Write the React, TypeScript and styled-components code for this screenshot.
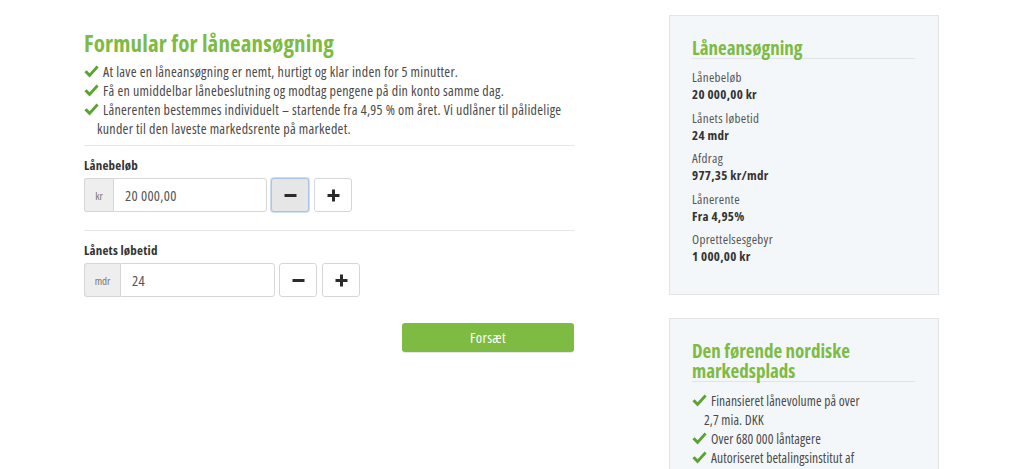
import React from "react";
import styled, { createGlobalStyle } from "styled-components";

const GlobalStyle = createGlobalStyle`
  html, body { margin: 0; padding: 0; background: #fff; }
  body {
    font-family: "Open Sans", "Noto Sans", sans-serif;
    font-stretch: 75%;
    color: #4a4a4a;
  }
  * { box-sizing: border-box; }
`;

const GREEN = "#7dbb42";
const CHECK = "#5aa32f";

const Page = styled.div`
  display: flex;
  align-items: flex-start;
  padding: 15px 0 0 84px;
  gap: 95px;
  height: 469px;
  overflow: hidden;
`;

const Main = styled.main`
  width: 490px;
  padding-top: 14px;
  display: flex;
  flex-direction: column;
`;

const Title = styled.h1`
  margin: 0;
  font-size: 23px;
  line-height: 28px;
  font-weight: 700;
  color: ${GREEN};
  letter-spacing: 0.15px;
`;

const CheckList = styled.ul<{ $indent: number }>`
  list-style: none;
  margin: 5px 0 0;
  padding: 0;
  font-size: 14px;
  line-height: 19px;
  letter-spacing: 0.28px;
  color: #4a4a4a;
  li {
    padding-left: ${(p) => p.$indent}px;
    text-indent: -${(p) => p.$indent}px;
  }
`;

const CheckIcon = styled.svg`
  width: 15px;
  height: 13px;
  vertical-align: -1px;
  margin-right: 4px;
`;

const Check = () => (
  <CheckIcon viewBox="0 0 15 13">
    <path
      d="M0.4 7.2 L2.6 5.2 L5.6 8.2 L12.6 0.6 L14.6 2.4 L5.6 12.4 Z"
      fill={CHECK}
    />
  </CheckIcon>
);

const Divider = styled.hr<{ $top: number; $bottom: number }>`
  border: none;
  border-top: 1px solid #e6e6e6;
  margin: ${(p) => p.$top}px 0 ${(p) => p.$bottom}px;
  width: 100%;
`;

const Label = styled.label`
  display: block;
  font-size: 13px;
  line-height: 18px;
  font-weight: 700;
  letter-spacing: 0.2px;
  color: #333;
  margin-bottom: 4px;
`;

const FieldRow = styled.div`
  display: flex;
  align-items: stretch;
  height: 34px;
`;

const InputGroup = styled.div<{ $width: number }>`
  display: flex;
  width: ${(p) => p.$width}px;
  height: 34px;
`;

const Addon = styled.span<{ $width: number }>`
  display: flex;
  align-items: center;
  justify-content: center;
  width: ${(p) => p.$width}px;
  background: #eeeeee;
  border: 1px solid #d6d6d6;
  border-right: none;
  border-radius: 3px 0 0 3px;
  font-size: 11px;
  color: #777;
`;

const Input = styled.input`
  flex: 1;
  min-width: 0;
  border: 1px solid #d6d6d6;
  border-radius: 0 3px 3px 0;
  padding: 0 11px;
  font-family: inherit;
  font-stretch: 75%;
  font-size: 14.5px;
  letter-spacing: 0.3px;
  color: #555;
  outline: none;
  background: #fff;
`;

const StepButton = styled.button<{ $active?: boolean }>`
  width: 38px;
  height: 34px;
  margin-left: 4px;
  display: flex;
  align-items: center;
  justify-content: center;
  border-radius: 3px;
  border: 1px solid ${(p) => (p.$active ? "#a9c4e6" : "#d6d6d6")};
  background: ${(p) => (p.$active ? "#e6e6e6" : "#fff")};
  box-shadow: ${(p) => (p.$active ? "0 0 0 1px rgba(120,160,215,0.35)" : "none")};
  padding: 0;
  cursor: pointer;
  & + & {
    margin-left: 5px;
  }
`;

const StepIcon = styled.svg`
  width: 13px;
  height: 13px;
`;

const Minus = () => (
  <StepIcon viewBox="0 0 13 13">
    <rect x="0.5" y="5" width="12" height="3" fill="#2b2b2b" />
  </StepIcon>
);

const Plus = () => (
  <StepIcon viewBox="0 0 13 13">
    <rect x="0.5" y="5" width="12" height="3" fill="#2b2b2b" />
    <rect x="5" y="0.5" width="3" height="12" fill="#2b2b2b" />
  </StepIcon>
);

const Actions = styled.div`
  display: flex;
  justify-content: flex-end;
  margin-top: 26px;
`;

const Submit = styled.button`
  width: 172px;
  height: 29px;
  border: none;
  border-radius: 3px;
  background: ${GREEN};
  color: #fff;
  font-family: inherit;
  font-stretch: 75%;
  font-size: 14.5px;
  letter-spacing: 0.3px;
  box-shadow: 0 1px 1px rgba(0, 0, 0, 0.1);
  cursor: pointer;
`;

const Sidebar = styled.aside`
  width: 270px;
  display: flex;
  flex-direction: column;
  gap: 23px;
`;

const Card = styled.section<{ $bottom: number }>`
  background: #f4f7fa;
  border: 1px solid #e2e6e9;
  padding: 22px 23px ${(p) => p.$bottom}px 22px;
`;

const CardTitle = styled.h2`
  margin: 0;
  font-size: 19px;
  line-height: 20px;
  font-weight: 700;
  color: ${GREEN};
  padding-bottom: 0;
  border-bottom: 1px solid #e1e5e8;
`;

const Facts = styled.dl`
  margin: 10px 0 0;
  display: flex;
  flex-direction: column;
  gap: 6.5px;
  letter-spacing: 0.3px;
`;

const Fact = styled.div`
  display: flex;
  flex-direction: column;
`;

const FactLabel = styled.dt`
  font-size: 13px;
  line-height: 17px;
  color: #555;
`;

const FactValue = styled.dd`
  margin: 0;
  font-size: 13px;
  line-height: 17px;
  font-weight: 700;
  color: #333;
`;

const facts = [
  ["Lånebeløb", "20 000,00 kr"],
  ["Lånets løbetid", "24 mdr"],
  ["Afdrag", "977,35 kr/mdr"],
  ["Lånerente", "Fra 4,95%"],
  ["Oprettelsesgebyr", "1 000,00 kr"],
];

const SideList = styled(CheckList)`
  margin-top: 10px;
  padding-right: 50px;
  font-size: 13.5px;
  letter-spacing: 0.1px;
`;

export default function App() {
  return (
    <>
      <GlobalStyle />
      <Page>
        <Main>
          <Title>Formular for låneansøgning</Title>
          <CheckList $indent={13}>
            <li>
              <Check />
              At lave en låneansøgning er nemt, hurtigt og klar inden for 5 minutter.
            </li>
            <li>
              <Check />
              Få en umiddelbar lånebeslutning og modtag pengene på din konto samme dag.
            </li>
            <li>
              <Check />
              Lånerenten bestemmes individuelt – startende fra 4,95 % om året. Vi udlåner til pålidelige kunder til den laveste markedsrente på markedet.
            </li>
          </CheckList>
          <Divider $top={7} $bottom={10} />
          <Label>Lånebeløb</Label>
          <FieldRow>
            <InputGroup $width={183}>
              <Addon $width={29}>kr</Addon>
              <Input defaultValue="20 000,00" />
            </InputGroup>
            <StepButton $active>
              <Minus />
            </StepButton>
            <StepButton>
              <Plus />
            </StepButton>
          </FieldRow>
          <Divider $top={18} $bottom={10} />
          <Label>Lånets løbetid</Label>
          <FieldRow>
            <InputGroup $width={191}>
              <Addon $width={36}>mdr</Addon>
              <Input defaultValue="24" />
            </InputGroup>
            <StepButton>
              <Minus />
            </StepButton>
            <StepButton>
              <Plus />
            </StepButton>
          </FieldRow>
          <Actions>
            <Submit>Forsæt</Submit>
          </Actions>
        </Main>
        <Sidebar>
          <Card $bottom={29}>
            <CardTitle>Låneansøgning</CardTitle>
            <Facts>
              {facts.map(([l, v]) => (
                <Fact key={l}>
                  <FactLabel>{l}</FactLabel>
                  <FactValue>{v}</FactValue>
                </Fact>
              ))}
            </Facts>
          </Card>
          <Card $bottom={20}>
            <CardTitle>Den førende nordiske markedsplads</CardTitle>
            <SideList $indent={12}>
              <li>
                <Check />
                Finansieret lånevolume på over 2,7 mia. DKK
              </li>
              <li>
                <Check />
                Over 680 000 låntagere
              </li>
              <li>
                <Check />
                Autoriseret betalingsinstitut af Finanstilsynet
              </li>
            </SideList>
          </Card>
        </Sidebar>
      </Page>
    </>
  );
}
